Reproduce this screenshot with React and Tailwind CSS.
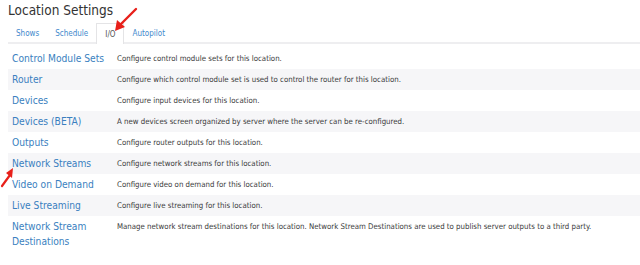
export default function App() {
  const rows = [
    ["Control Module Sets", "Configure control module sets for this location."],
    ["Router", "Configure which control module set is used to control the router for this location."],
    ["Devices", "Configure input devices for this location."],
    ["Devices (BETA)", "A new devices screen organized by server where the server can be re-configured."],
    ["Outputs", "Configure router outputs for this location."],
    ["Network Streams", "Configure network streams for this location."],
    ["Video on Demand", "Configure video on demand for this location."],
    ["Live Streaming", "Configure live streaming for this location."],
    ["Network Stream Destinations", "Manage network stream destinations for this location. Network Stream Destinations are used to publish server outputs to a third party."],
  ];
  return (
    <div className="relative w-[640px] h-[265px] overflow-hidden bg-white pl-2 font-['DejaVu_Sans_Condensed','DejaVu_Sans',sans-serif]">
      <h1 className="text-[13.5px] leading-[21px] text-[#333]">Location Settings</h1>
      <div className="flex items-end h-[23px] border-b-2 border-[#eeeef0] text-[8px] text-[#4289cc]">
        <div className="h-[21px] px-2 pt-[7px]">Shows</div>
        <div className="h-[21px] px-2 pt-[7px]">Schedule</div>
        <div className="h-[21px] -mb-[2px] px-2 pt-[5px] border border-b-0 border-[#e4e4e6] bg-white text-[#555]">I/O</div>
        <div className="h-[21px] px-2 pt-[7px]">Autopilot</div>
      </div>
      <div className="mt-[4px]">
        {rows.map(([name, desc], i) => (
          <div key={name} className={`flex min-h-[21px] ${i % 2 === 1 ? "bg-[#f6f6f8]" : ""}`}>
            <div className="w-[109px] shrink-0 pl-1 pt-[3px] text-[10.2px] leading-[15px] text-[#3a7fc0]">
              {name}
            </div>
            <div className="pt-[5px] text-[7.8px] leading-[11px] text-[#3a3a3a]">{desc}</div>
          </div>
        ))}
      </div>
      <svg className="absolute left-0 top-0 pointer-events-none" width="640" height="265">
        <line x1="136" y1="9" x2="120" y2="25" stroke="#e8201a" strokeWidth="2.4" strokeLinecap="round" />
        <polygon points="115,31 117,20 125,27" fill="#e8201a" />
        <line x1="2" y1="186" x2="10" y2="175" stroke="#e8201a" strokeWidth="2.2" strokeLinecap="round" />
        <polygon points="13,168 6,173 12,178" fill="#e8201a" />
      </svg>
    </div>
  );
}
